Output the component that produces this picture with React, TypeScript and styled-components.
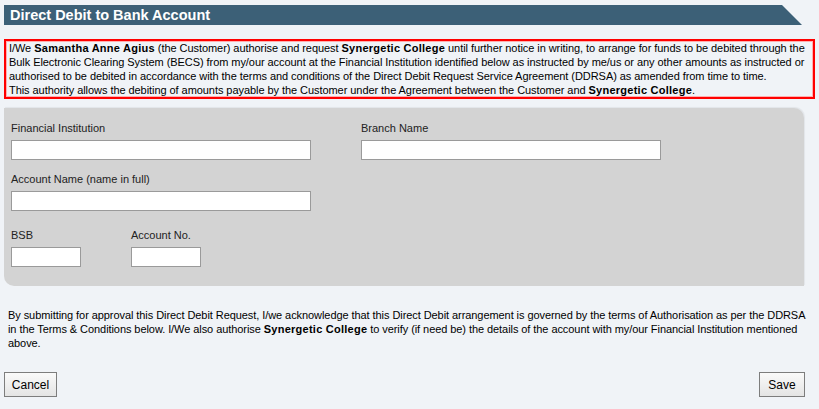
import styled, { createGlobalStyle } from "styled-components";

const GlobalStyle = createGlobalStyle`
  body {
    margin: 0;
    background: #f0f3f7;
    font-family: "Liberation Sans", Arial, sans-serif;
    font-size: 11px;
    color: #000;
  }
`;

const Page = styled.div`
  padding: 5px 4px 0;
  width: 811px;
`;

const Header = styled.div`
  width: 798px;
  height: 20px;
  background: #3c6077;
  clip-path: polygon(0 0, calc(100% - 20px) 0, 100% 100%, 0 100%);
`;

const Title = styled.h1`
  margin: 0;
  padding-left: 6px;
  font-size: 14.5px;
  font-weight: bold;
  line-height: 21px;
  color: #fff;
`;

const Notice = styled.div`
  margin-top: 14px;
  border: 2px solid #f00;
  box-shadow: inset 0 0 0 1px #ffb0b0;
  padding: 0 3px;
  line-height: 14px;
  white-space: nowrap;
  overflow: hidden;
  letter-spacing: -0.06px;
`;

const Strong = styled.b`
  letter-spacing: 0.25px;
`;

const Panel = styled.div`
  margin-top: 9px;
  width: 800px;
  box-sizing: border-box;
  background: #d3d3d3;
  border-radius: 0 10px 0 10px;
  padding: 13px 7px 19px;
  box-shadow: 1px -1px 1px rgba(0, 0, 0, 0.06);
`;

const Row = styled.div<{ $top?: number }>`
  display: flex;
  margin-top: ${(p) => p.$top ?? 0}px;
`;

const Field = styled.div<{ $col: number }>`
  width: ${(p) => p.$col}px;
  display: flex;
  flex-direction: column;
`;

const Label = styled.label`
  line-height: 14px;
  color: #222;
  margin-bottom: 5px;
`;

const Input = styled.input<{ $w: number }>`
  width: ${(p) => p.$w}px;
  height: 20px;
  box-sizing: border-box;
  border: 1px solid #9a9a9a;
  background: #fff;
  padding: 0 3px;
  margin: 0;
  font: inherit;
`;

const Terms = styled.p`
  margin: 22px 0 0;
  padding-left: 4px;
  line-height: 14px;
  white-space: nowrap;
  letter-spacing: -0.07px;
`;

const Footer = styled.div`
  margin-top: 22px;
  width: 801px;
  display: flex;
  justify-content: space-between;
`;

const Button = styled.button<{ $w: number }>`
  width: ${(p) => p.$w}px;
  height: 25px;
  padding: 0;
  border: 1px solid #7d7d7d;
  background: linear-gradient(#fafafa, #e4e4e4);
  font-family: "Liberation Sans", Arial, sans-serif;
  font-size: 12px;
  color: #000;
`;

export default function App() {
  return (
    <>
      <GlobalStyle />
      <Page>
        <Header>
          <Title>Direct Debit to Bank Account</Title>
        </Header>
        <Notice>
          I/We <Strong>Samantha Anne Agius</Strong> (the Customer) authorise and request{" "}
          <Strong>Synergetic College</Strong> until further notice in writing, to arrange for funds to be debited
          through the
          <br />
          Bulk Electronic Clearing System (BECS) from my/our account at the Financial Institution identified below
          as instructed by me/us or any other amounts as instructed or
          <br />
          authorised to be debited in accordance with the terms and conditions of the Direct Debit Request Service
          Agreement (DDRSA) as amended from time to time.
          <br />
          This authority allows the debiting of amounts payable by the Customer under the Agreement between the
          Customer and <Strong>Synergetic College</Strong>.
        </Notice>
        <Panel>
          <Row>
            <Field $col={350}>
              <Label>Financial Institution</Label>
              <Input $w={300} />
            </Field>
            <Field $col={300}>
              <Label>Branch Name</Label>
              <Input $w={300} />
            </Field>
          </Row>
          <Row $top={12}>
            <Field $col={350}>
              <Label>Account Name (name in full)</Label>
              <Input $w={300} />
            </Field>
          </Row>
          <Row $top={17}>
            <Field $col={120}>
              <Label>BSB</Label>
              <Input $w={70} />
            </Field>
            <Field $col={120}>
              <Label>Account No.</Label>
              <Input $w={70} />
            </Field>
          </Row>
        </Panel>
        <Terms>
          By submitting for approval this Direct Debit Request, I/we acknowledge that this Direct Debit arrangement
          is governed by the terms of Authorisation as per the DDRSA
          <br />
          in the Terms &amp; Conditions below. I/We also authorise <Strong>Synergetic College</Strong> to verify (if
          need be) the details of the account with my/our Financial Institution mentioned
          <br />
          above.
        </Terms>
        <Footer>
          <Button $w={53}>Cancel</Button>
          <Button $w={46}>Save</Button>
        </Footer>
      </Page>
    </>
  );
}
